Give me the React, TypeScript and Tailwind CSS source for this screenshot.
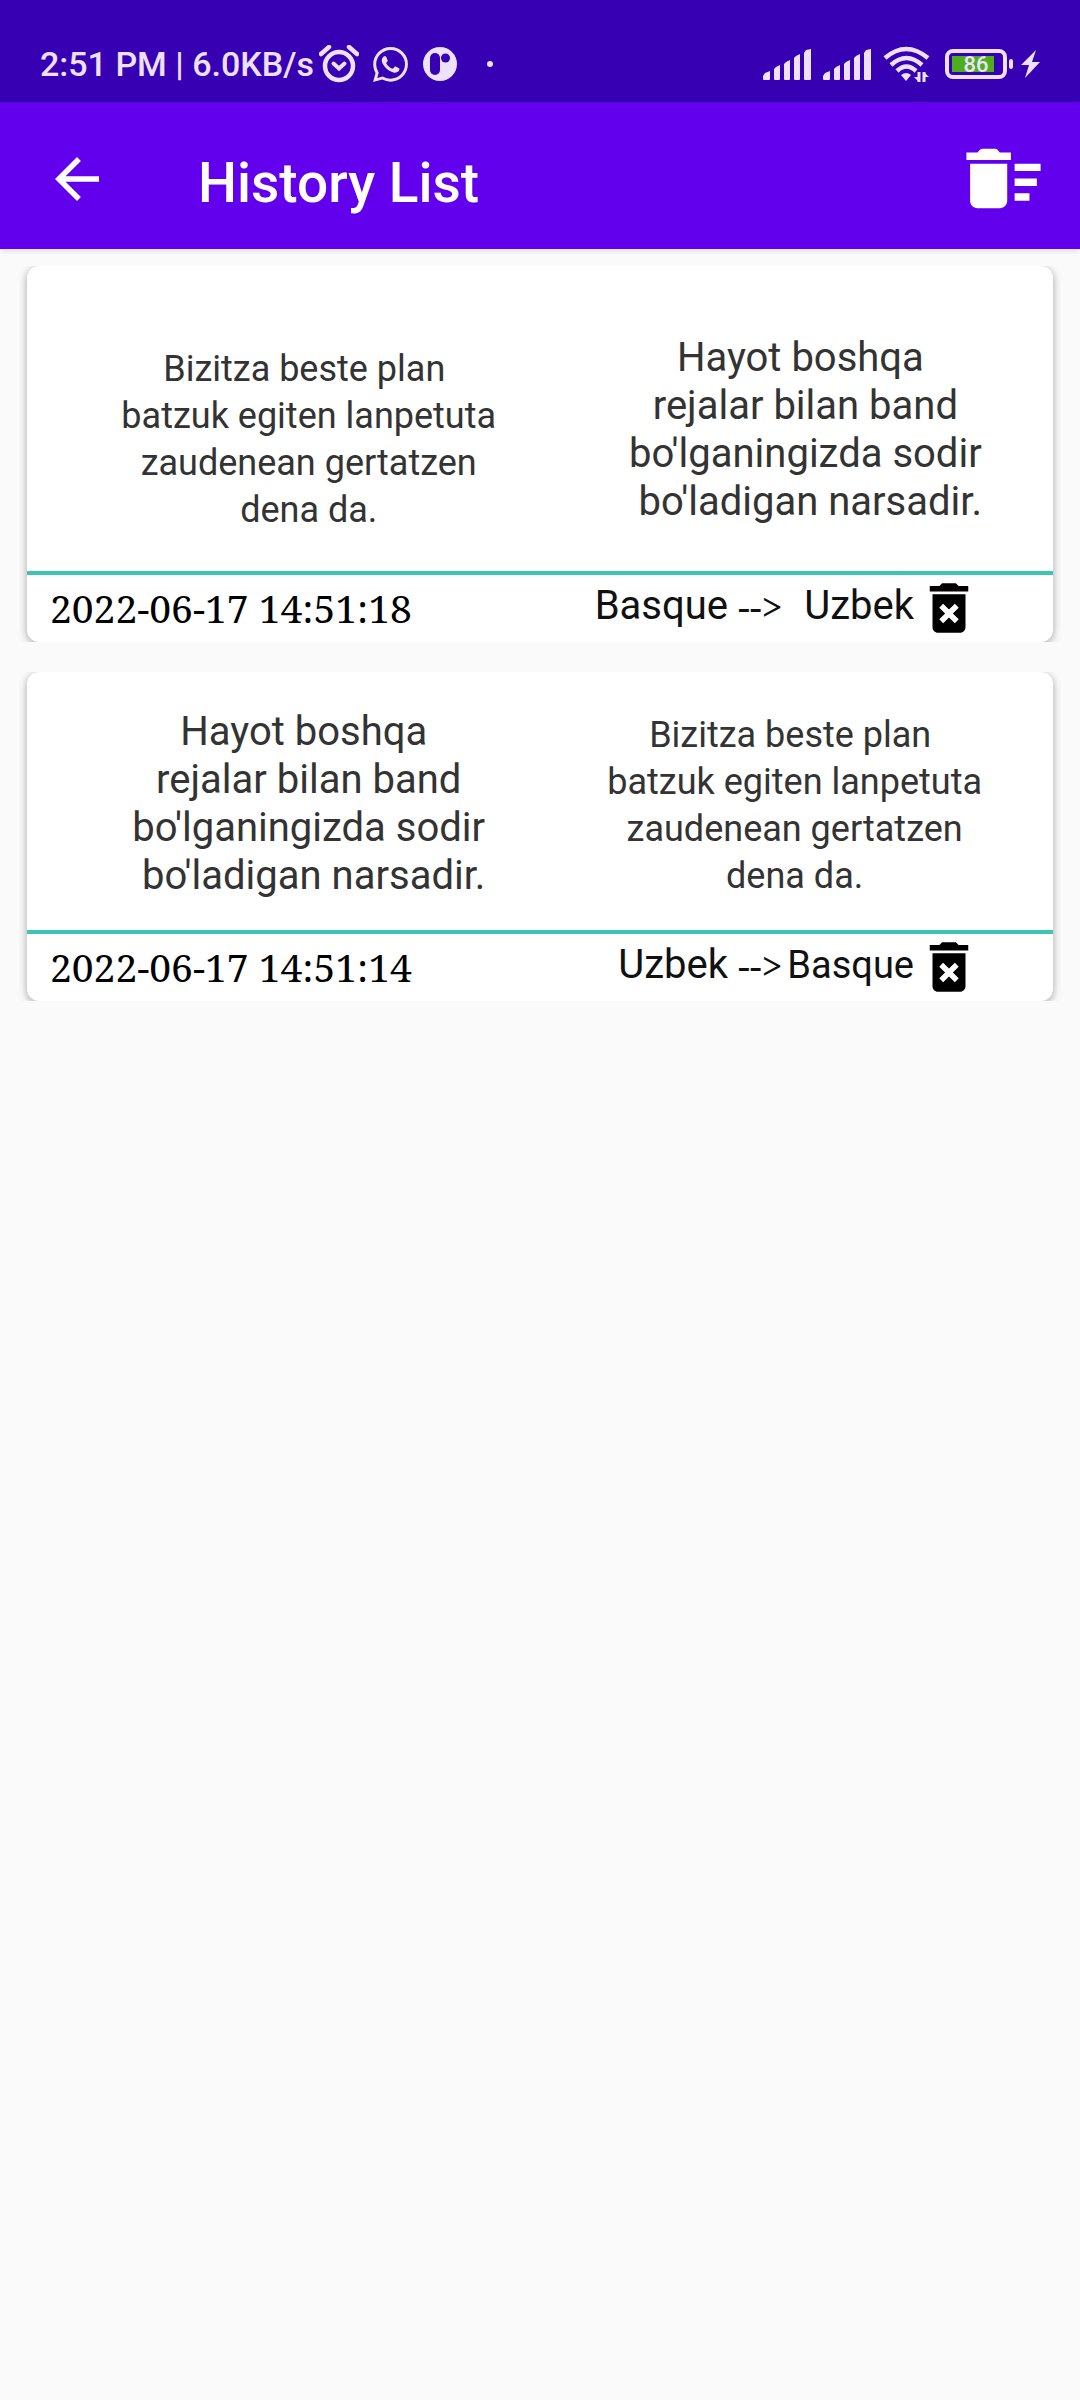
import type { ReactNode } from 'react'

interface Phrase {
  lines: string[]
  className: string
}

interface HistoryEntry {
  id: number
  source: Phrase
  target: Phrase
  from: string
  to: string
  toClassName: string
  date: string
  className: string
}

const basque = ['Bizitza beste plan ', 'batzuk egiten lanpetuta', 'zaudenean gertatzen', 'dena da.']
const uzbek = ['Hayot boshqa ', 'rejalar bilan band', "bo'lganingizda sodir", " bo'ladigan narsadir."]

const entries: HistoryEntry[] = [
  {
    id: 2,
    source: { lines: basque, className: 'text-[36px] leading-[47px]' },
    target: { lines: uzbek, className: 'text-[40px] leading-[48px] pb-2' },
    from: 'Basque',
    to: 'Uzbek',
    toClassName: 'text-[40px]',
    date: '2022-06-17 14:51:18',
    className: 'pt-[68px] pb-[37px]',
  },
  {
    id: 1,
    source: { lines: uzbek, className: 'text-[40px] leading-[48px]' },
    target: { lines: basque, className: 'text-[36px] leading-[47px]' },
    from: 'Uzbek',
    to: 'Basque',
    toClassName: 'text-[38px]',
    date: '2022-06-17 14:51:14',
    className: 'pt-9 pb-[30px]',
  },
]

function Signal() {
  return (
    <svg className="w-12 h-8" viewBox="0 0 48 32" fill="currentColor">
      <path d="M0 31v-3l2-3 5-2v8q0 1-1 1H1q-1 0-1-1zM11 31V21l2-2 4-2v14q0 1-1 1h-4q-1 0-1-1zM21 31V16l2-2 4-2v19q0 1-1 1h-4q-1 0-1-1zM31 31V10l2-2 4-2v25q0 1-1 1h-4q-1 0-1-1zM41 31V5l2-3 5-1v30q0 1-1 1h-5q-1 0-1-1z" />
    </svg>
  )
}

function StatusBar() {
  return (
    <div className="flex items-center justify-between bg-[#3700b3] pl-10 pr-10 pt-[26px] h-[102px] text-[#eee0ff]">
      <div className="flex items-center">
        <span className="text-[34px] leading-[40px] font-medium whitespace-nowrap">2:51 PM | 6.0KB/s</span>
        <svg className="ml-[5px] w-10 h-[38px]" viewBox="0 0 40 38" fill="none" stroke="currentColor">
          <circle cx="20" cy="21" r="14" strokeWidth="4.5" />
          <path d="M2 9l8-7M38 9l-8-7" strokeWidth="4.5" strokeLinecap="round" />
          <path d="M14.500 18.500l5.500 5 5.500-5" strokeWidth="4" strokeLinecap="round" />
        </svg>
        <svg className="ml-[14px] w-[35px] h-[35px]" viewBox="0 0 24 24" fill="currentColor">
          <path d="M17.472 14.382c-.297-.149-1.758-.867-2.03-.967-.273-.099-.471-.148-.67.15-.197.297-.767.966-.94 1.164-.173.199-.347.223-.644.075-.297-.15-1.255-.463-2.390-1.475-.883-.788-1.480-1.761-1.653-2.059-.173-.297-.018-.458.130-.606.134-.133.298-.347.446-.520.149-.174.198-.298.298-.497.099-.198.050-.371-.025-.520-.075-.149-.669-1.612-.916-2.207-.242-.579-.487-.500-.669-.510-.173-.008-.371-.010-.570-.010-.198 0-.520.074-.792.372-.272.297-1.040 1.016-1.040 2.479 0 1.462 1.065 2.875 1.213 3.074.149.198 2.096 3.200 5.077 4.487.709.306 1.262.489 1.694.625.712.227 1.360.195 1.871.118.571-.085 1.758-.719 2.006-1.413.248-.694.248-1.289.173-1.413-.074-.124-.272-.198-.570-.347m-5.421 7.403h-.004a9.870 9.870 0 0 1-5.031-1.378l-.361-.214-3.741.982.998-3.648-.235-.374a9.860 9.860 0 0 1-1.510-5.260c.001-5.450 4.436-9.884 9.888-9.884 2.640 0 5.122 1.030 6.988 2.898a9.825 9.825 0 0 1 2.893 6.994c-.003 5.450-4.437 9.884-9.885 9.884m8.413-18.297A11.815 11.815 0 0 0 12.050 0C5.495 0 .160 5.335.157 11.892c0 2.096.547 4.142 1.588 5.945L.057 24l6.305-1.654a11.882 11.882 0 0 0 5.683 1.448h.005c6.554 0 11.890-5.335 11.893-11.893a11.821 11.821 0 0 0-3.480-8.413" />
        </svg>
        <svg className="ml-[15px] w-[34px] h-[34px]" viewBox="0 0 34 34">
          <circle cx="17" cy="17" r="17" fill="currentColor" />
          <rect x="7" y="6" width="10" height="22" rx="5" fill="#3700b3" />
          <circle cx="22.500" cy="11" r="4.500" fill="#3700b3" />
        </svg>
        <span className="ml-[30px] size-[6px] rounded-full bg-current" />
      </div>

      <div className="flex items-center">
        <Signal />
        <span className="ml-3">
          <Signal />
        </span>
        <svg className="ml-3 w-12 h-9" viewBox="0 0 48 36" fill="none" stroke="currentColor">
          <path d="M2 12Q23 -6 45 12" strokeWidth="4.500" />
          <path d="M8 19Q23.500 5 39 19" strokeWidth="4.500" />
          <path d="M14 25Q23.500 16 33 25" strokeWidth="4.500" />
          <path d="M18 29q5.500-4 10 0l-5 6z" fill="currentColor" stroke="none" />
          <path d="M36 26v10M41 26v10" strokeWidth="3" />
          <path d="M31 31h5v5zM46 31h-5v-5z" fill="currentColor" stroke="none" />
        </svg>
        <div className="relative ml-[14px] flex w-[62px] h-[30px] items-center rounded-lg border-4 border-current p-[3px]">
          <span className="h-4 w-[42px] bg-[#4caf1d]" />
          <span className="absolute inset-0 text-center text-[22px] leading-[23px] font-medium">86</span>
        </div>
        <span className="ml-[2px] h-[10px] w-1 rounded-sm bg-current" />
        <svg className="ml-2 w-[19px] h-[30px]" viewBox="0 0 19 30" fill="currentColor">
          <path d="M15 1L0 16h8L4 29 19 13h-8z" />
        </svg>
      </div>
    </div>
  )
}

function IconButton({ label, className, children }: { label: string; className: string; children: ReactNode }) {
  return (
    <button type="button" aria-label={label} className="shrink-0">
      <svg className={className} viewBox="0 0 24 24" fill="currentColor">
        {children}
      </svg>
    </button>
  )
}

function AppBar() {
  return (
    <header className="relative flex items-center bg-[#6200ee] pl-11 pr-8 h-[147px] pt-[6px] text-white shadow-[0_1px_6px_rgba(0,0,0,0.15)]">
      <IconButton label="Back" className="block size-[66px]">
        <path d="M20 11H7.830l5.590-5.590L12 4l-8 8 8 8 1.410-1.410L7.830 13H20v-2z" />
      </IconButton>
      <h1 className="ml-[88px] flex-1 pt-2 text-[55px] leading-[64px] font-medium">History List</h1>
      <IconButton label="Clear history" className="block size-[89px]">
        <path d="M15 16h4v2h-4zm0-8h7v2h-7zm0 4h6v2h-6zM3 18c0 1.100.9 2 2 2h6c1.100 0 2-.9 2-2V8H3v10zM14 5h-3l-.700-.8Q10 4 9.700 4H6.300Q6 4 5.700 4.200L5 5H2v2h12z" />
      </IconButton>
    </header>
  )
}

function PhraseText({ lines, className }: Phrase) {
  return (
    <p className={`text-center whitespace-pre text-[#333333] ${className}`}>
      {lines.map((line) => (
        <span key={line} className="block">
          {line}
        </span>
      ))}
    </p>
  )
}

function HistoryCard({ entry }: { entry: HistoryEntry }) {
  return (
    // The clip keeps the shadow on the two sides of the card only
    <li className="overflow-hidden px-2">
      <article className="rounded-xl bg-white shadow-[0_2px_8px_rgba(0,0,0,0.35)]">
        <div className={`flex items-end border-b-4 border-[#3cc4b4] pr-[71px] ${entry.className}`}>
          <div className="flex w-[59%] justify-center">
            <PhraseText {...entry.source} />
          </div>
          <div className="flex flex-1 justify-end">
            <PhraseText {...entry.target} />
          </div>
        </div>
        <div className="flex items-start justify-between pl-[23px] pr-[71px]">
          <time className="pt-[6px] font-['Noto_Serif','DejaVu_Serif_Condensed','Liberation_Serif',serif] text-[39px] leading-[54px] text-black">
            {entry.date}
          </time>
          <div className="flex items-start text-[40px] leading-[48px] text-[#111111]">
            <span className="pt-[7px]">{entry.from}</span>
            <span className="ml-[10px] w-[46px] pt-[7px] font-['Noto_Serif','Liberation_Serif',serif] text-[38px]">--&gt;</span>
            <span className={`min-w-[130px] pt-[7px] text-right ${entry.toClassName}`}>{entry.to}</span>
            <IconButton label={`Delete entry ${entry.date}`} className="block ml-[2px] mb-px size-[66px] text-black">
              <path d="M6 19c0 1.100.9 2 2 2h8c1.100 0 2-.9 2-2V7H6v12zm2.460-7.120l1.410-1.410L12 12.590l2.120-2.120 1.410 1.410L13.410 14l2.120 2.120-1.410 1.410L12 15.410l-2.120 2.120-1.410-1.410L10.590 14l-2.130-2.120zM15.500 4l-1-1h-5l-1 1H5v2h14V4z" />
            </IconButton>
          </div>
        </div>
      </article>
    </li>
  )
}

export default function App() {
  return (
    <div className="min-h-screen bg-[#fafafa] font-[Roboto,'Liberation_Sans',sans-serif]">
      <StatusBar />
      <AppBar />
      <main>
        <ul className="flex flex-col gap-[30px] px-[19px] pt-[17px]">
          {entries.map((entry) => (
            <HistoryCard key={entry.id} entry={entry} />
          ))}
        </ul>
      </main>
    </div>
  )
}
